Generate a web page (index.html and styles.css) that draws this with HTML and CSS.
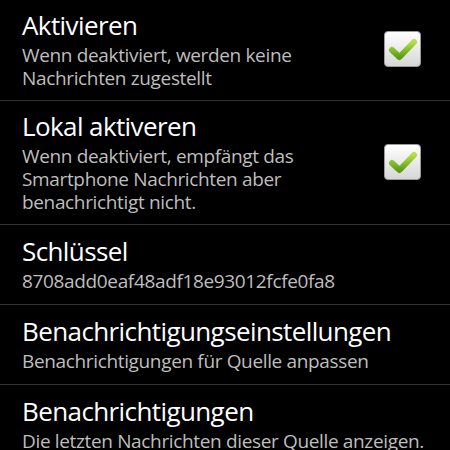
FILE: index.html
```html
<!DOCTYPE html>
<html lang="de">
<head>
<meta charset="utf-8">
<title>Einstellungen</title>
<link rel="stylesheet" href="styles.css">
</head>
<body>
<ul class="prefs">
  <li class="pref">
    <div class="text">
      <div class="title">Aktivieren</div>
      <div class="summary">Wenn deaktiviert, werden keine Nachrichten zugestellt</div>
    </div>
    <div class="check">
      <svg viewBox="0 0 37 36" width="37" height="36" aria-hidden="true">
        <defs>
          <linearGradient id="box1" x1="0" y1="0" x2="0" y2="1">
            <stop offset="0" stop-color="#ffffff"/>
            <stop offset="1" stop-color="#d6d6d6"/>
          </linearGradient>
          <linearGradient id="tick1" x1="0" y1="0" x2="0" y2="1">
            <stop offset="0" stop-color="#b4e04c"/>
            <stop offset="1" stop-color="#5c9e12"/>
          </linearGradient>
        </defs>
        <rect x="0.5" y="0.5" width="36" height="35" rx="3.5" fill="url(#box1)" stroke="#9a9a9a"/>
        <path d="M8 19 L15.5 26 L30 11" fill="none" stroke="url(#tick1)" stroke-width="6" stroke-linecap="round" stroke-linejoin="round"/>
      </svg>
    </div>
  </li>
  <li class="pref">
    <div class="text">
      <div class="title">Lokal aktiveren</div>
      <div class="summary">Wenn deaktiviert, empfängt das Smartphone Nachrichten aber benachrichtigt nicht.</div>
    </div>
    <div class="check">
      <svg viewBox="0 0 37 36" width="37" height="36" aria-hidden="true">
        <rect x="0.5" y="0.5" width="36" height="35" rx="3.5" fill="url(#box1)" stroke="#9a9a9a"/>
        <path d="M8 19 L15.5 26 L30 11" fill="none" stroke="url(#tick1)" stroke-width="6" stroke-linecap="round" stroke-linejoin="round"/>
      </svg>
    </div>
  </li>
  <li class="pref">
    <div class="text">
      <div class="title">Schlüssel</div>
      <div class="summary">8708add0eaf48adf18e93012fcfe0fa8</div>
    </div>
  </li>
  <li class="pref">
    <div class="text">
      <div class="title">Benachrichtigungseinstellungen</div>
      <div class="summary">Benachrichtigungen für Quelle anpassen</div>
    </div>
  </li>
  <li class="pref">
    <div class="text">
      <div class="title">Benachrichtigungen</div>
      <div class="summary">Die letzten Nachrichten dieser Quelle anzeigen.</div>
    </div>
  </li>
</ul>
</body>
</html>
```

FILE: styles.css
```css
html, body {
  margin: 0;
  padding: 0;
  background: #000;
}

body {
  font-family: "Open Sans", "DejaVu Sans", sans-serif;
  overflow: hidden;
}

.prefs {
  list-style: none;
  margin: 0;
  padding: 0;
}

.pref {
  display: flex;
  align-items: center;
  box-sizing: border-box;
  min-height: 80px;
  padding: 8px 8px 10px 22px;
  border-bottom: 1px solid #333;
}

.text {
  flex: 1;
  min-width: 0;
}

.title {
  color: #fff;
  font-size: 26px;
  letter-spacing: -0.6px;
  line-height: 35px;
  white-space: nowrap;
}

.summary {
  color: #bebebe;
  font-size: 19px;
  letter-spacing: -0.35px;
  line-height: 23px;
  margin-top: 1px;
  max-width: 330px;
}

.pref:nth-child(n+3) .summary {
  max-width: none;
  white-space: nowrap;
}

.check {
  flex: none;
  width: 37px;
  height: 36px;
  margin: 0 21px 0 20px;
}

.check svg {
  display: block;
}
```
